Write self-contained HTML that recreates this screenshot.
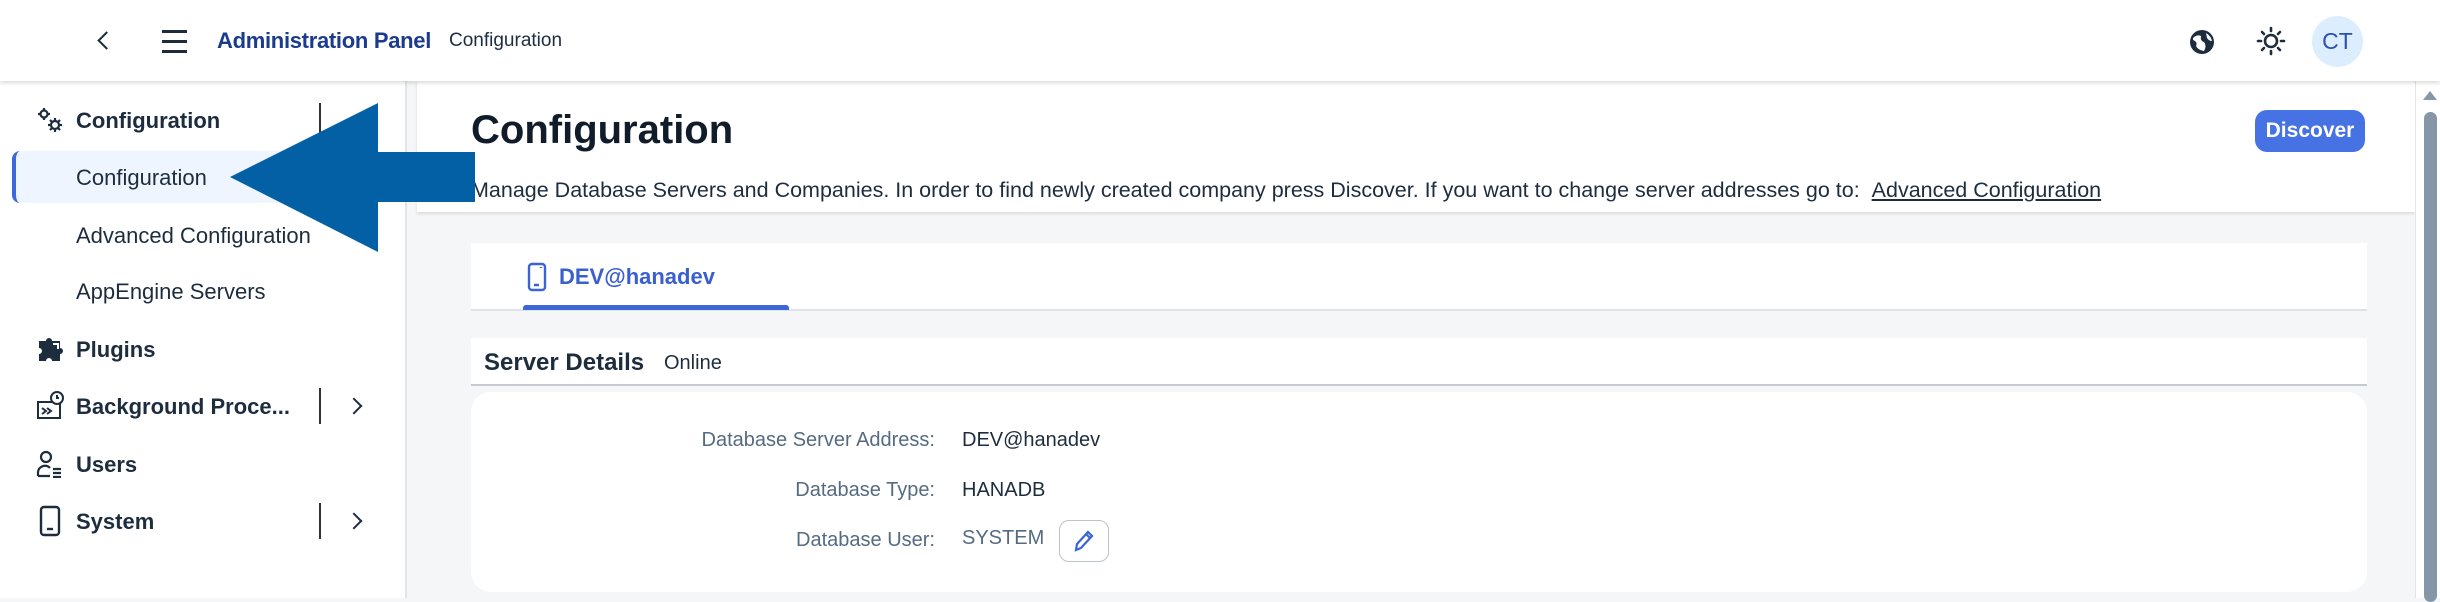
<!DOCTYPE html>
<html><head><meta charset="utf-8"><style>
*{margin:0;padding:0;box-sizing:border-box}
body{width:2440px;height:598px;overflow:hidden;background:#f5f6f7;font-family:"Liberation Sans",sans-serif;color:#1d2d3e;position:relative}
.abs{position:absolute}
#hdr{left:0;top:0;width:2440px;height:81px;background:#fff;box-shadow:0 2px 4px rgba(0,0,0,.15);z-index:3}
#side{left:0;top:81px;width:407px;height:517px;background:#fff;border-right:2px solid #e5e5e5}
.it{position:absolute;left:76px;font-size:22px;white-space:nowrap;transform:translateY(-50%)}
.b{font-weight:bold}
.sep{position:absolute;left:319px;width:2px;height:36px;background:#333}
.chev{position:absolute;left:348px;width:12px;height:12px;border-right:2.5px solid #1d2d3e;border-top:2.5px solid #1d2d3e;transform:rotate(45deg)}
</style></head><body>
<div id="hdr" class="abs">
 <div class="abs" style="left:100px;top:34px;width:13px;height:13px;border-left:2.5px solid #1d2d3e;border-bottom:2.5px solid #1d2d3e;transform:rotate(45deg)"></div>
 <div class="abs" style="left:162px;top:30px;width:25px;height:3px;background:#1d2d3e"></div>
 <div class="abs" style="left:162px;top:40px;width:25px;height:3px;background:#1d2d3e"></div>
 <div class="abs" style="left:162px;top:50px;width:25px;height:3px;background:#1d2d3e"></div>
 <div class="abs b" style="left:217px;top:28px;font-size:22px;color:#1b3b8c;letter-spacing:-0.3px">Administration Panel</div>
 <div class="abs" style="left:449px;top:30px;font-size:19px;color:#1d2d3e">Configuration</div>
 <svg class="abs" style="left:2188px;top:28px" width="28" height="28" viewBox="0 0 28 28"><circle cx="14" cy="14" r="12" fill="#1d2d3e"/><path d="M5 10 Q9 6 13 8 Q12 13 16 14 Q19 18 16 23 Q10 22 8 18 Q10 14 5 12Z" fill="#fff"/><path d="M18 5 Q23 8 24 13 Q21 13 19 10Z" fill="#fff"/></svg>
 <svg class="abs" style="left:2256px;top:26px" width="30" height="30" viewBox="0 0 30 30" stroke="#1d2d3e" stroke-width="2.6" fill="none" stroke-linecap="round"><circle cx="15" cy="15" r="6"/><path d="M15 2v3M15 25v3M2 15h3M25 15h3M6 6l2 2M22 22l2 2M24 6l-2 2M8 22l-2 2"/></svg>
 <div class="abs" style="left:2312px;top:16px;width:51px;height:51px;border-radius:50%;background:#dcedfd;color:#2a4fb4;font-size:23px;text-align:center;line-height:51px">CT</div>
</div>
<div id="side" class="abs">
 <svg class="abs" style="left:36px;top:25px" width="28" height="28" viewBox="0 0 28 28" fill="none" stroke="#1d2d3e" stroke-width="2.2"><circle cx="8" cy="8" r="3.5"/><path d="M8 2v2M8 12v2M2 8h2M12 8h2"/><circle cx="19" cy="19" r="4"/><path d="M19 12v3M19 23v3M12 19h3M23 19h3M14 14l2 2M22 22l2 2M24 14l-2 2M14 24l2-2"/></svg>
 <div class="it b" style="top:40px">Configuration</div>
 <div class="sep" style="top:22px"></div>
 <div class="abs" style="left:12px;top:70px;width:300px;height:52px;background:#eef5ff;border-radius:8px 0 0 8px;border-left:4px solid #3d69dd"></div>
 <div class="it" style="top:97px">Configuration</div>
 <div class="it" style="top:155px">Advanced Configuration</div>
 <div class="it" style="top:211px">AppEngine Servers</div>
 <svg class="abs" style="left:36px;top:254px" width="28" height="28" viewBox="0 0 28 28"><path d="M3 6h7a3 3 0 0 1 6 0h8v7a3 3 0 0 1 0 6v7H16a3 3 0 0 0-6 0H3v-7a3 3 0 0 0 0-6z" fill="#1d2d3e"/><path d="M17 9h5v5" stroke="#fff" stroke-width="2" fill="none"/></svg>
 <div class="it b" style="top:269px">Plugins</div>
 <svg class="abs" style="left:36px;top:309px" width="30" height="30" viewBox="0 0 30 30" fill="none" stroke="#1d2d3e" stroke-width="2"><rect x="2" y="12" width="22" height="16"/><circle cx="21" cy="8" r="6" fill="#fff"/><path d="M21 5v3h2M6 18l4 3-4 3M11 18l4 3-4 3"/></svg>
 <div class="it b" style="top:326px">Background Proce...</div>
 <div class="sep" style="top:307px"></div><div class="chev" style="top:319px"></div>
 <svg class="abs" style="left:36px;top:369px" width="28" height="28" viewBox="0 0 28 28" fill="none" stroke="#1d2d3e" stroke-width="2.2"><circle cx="10" cy="7" r="5"/><path d="M2 26v-4a7 7 0 0 1 12-4M2 26h12M17 19h8M17 23h8M17 27h8"/></svg>
 <div class="it b" style="top:384px">Users</div>
 <svg class="abs" style="left:38px;top:424px" width="24" height="32" viewBox="0 0 24 32" fill="none" stroke="#1d2d3e" stroke-width="2.4"><rect x="3" y="2" width="18" height="28" rx="3"/><path d="M9 24h6"/></svg>
 <div class="it b" style="top:441px">System</div>
 <div class="sep" style="top:422px"></div><div class="chev" style="top:434px"></div>
</div>
<!-- main -->
<div class="abs" style="left:417px;top:81px;width:1998px;height:131px;background:#fff;box-shadow:0 2px 3px rgba(0,0,0,.1)"></div>
<div class="abs b" style="left:471px;top:108px;font-size:40px;color:#111c2a">Configuration</div>
<div class="abs b" style="left:2255px;top:110px;width:110px;height:42px;background:#4672e4;border-radius:12px;color:#fff;font-size:21px;text-align:center;line-height:42px">Discover</div>
<div class="abs" style="left:471px;top:178px;font-size:21.5px;white-space:nowrap">Manage Database Servers and Companies. In order to find newly created company press Discover. If you want to change server addresses go to: &nbsp;<u>Advanced Configuration</u></div>
<div class="abs" style="left:471px;top:243px;width:1896px;height:68px;background:#fff;border-bottom:2px solid #dfe2e6"></div>
<svg class="abs" style="left:527px;top:262px" width="20" height="30" viewBox="0 0 20 30" fill="none" stroke="#3a63d6" stroke-width="2.4"><rect x="2" y="2" width="16" height="26" rx="3"/><path d="M7 23h5M14 5v1"/></svg>
<div class="abs b" style="left:559px;top:264px;font-size:22px;color:#3a5fcf">DEV@hanadev</div>
<div class="abs" style="left:523px;top:305px;width:266px;height:5px;background:#3e66d8;border-radius:3px 3px 0 0"></div>
<div class="abs" style="left:471px;top:338px;width:1896px;height:48px;background:#fff;border-bottom:2px solid #c5cad1"></div>
<div class="abs b" style="left:484px;top:349px;font-size:24px;color:#1d2d3e">Server Details</div>
<div class="abs" style="left:664px;top:352px;font-size:20px;color:#1d2d3e">Online</div>
<div class="abs" style="left:471px;top:392px;width:1896px;height:200px;background:#fff;border-radius:20px"></div>
<div class="abs" style="right:1505px;top:429px;font-size:20px;color:#556b82">Database Server Address:</div>
<div class="abs" style="left:962px;top:429px;font-size:20px">DEV@hanadev</div>
<div class="abs" style="right:1505px;top:479px;font-size:20px;color:#556b82">Database Type:</div>
<div class="abs" style="left:962px;top:479px;font-size:20px">HANADB</div>
<div class="abs" style="right:1505px;top:529px;font-size:20px;color:#556b82">Database User:</div>
<div class="abs" style="left:962px;top:527px;font-size:20px;color:#556b82">SYSTEM</div>
<div class="abs" style="left:1059px;top:520px;width:50px;height:42px;border:1.5px solid #bcc3ca;border-radius:10px;background:#fff"></div>
<svg class="abs" style="left:1072px;top:528px" width="24" height="26" viewBox="0 0 24 26" fill="none" stroke="#3a63d6" stroke-width="2.2"><path d="M4 22l1-6L16 4l4 4L9 20z M14 6l4 4"/></svg>
<!-- scrollbar -->
<div class="abs" style="left:2415px;top:81px;width:25px;height:517px;background:#fff;border-left:1px solid #e5e5e5"></div>
<div class="abs" style="left:2423px;top:91px;width:0;height:0;border-left:7px solid transparent;border-right:7px solid transparent;border-bottom:9px solid #8696a9"></div>
<div class="abs" style="left:2424px;top:112px;width:13px;height:490px;background:#8696a9;border-radius:7px"></div>
<!-- arrow -->
<svg class="abs" style="left:0;top:0;z-index:5" width="2440" height="598"><polygon points="230,177 378,103 378,152 475,152 475,202 378,202 378,252" fill="#0360a4"/></svg>
</body></html>
